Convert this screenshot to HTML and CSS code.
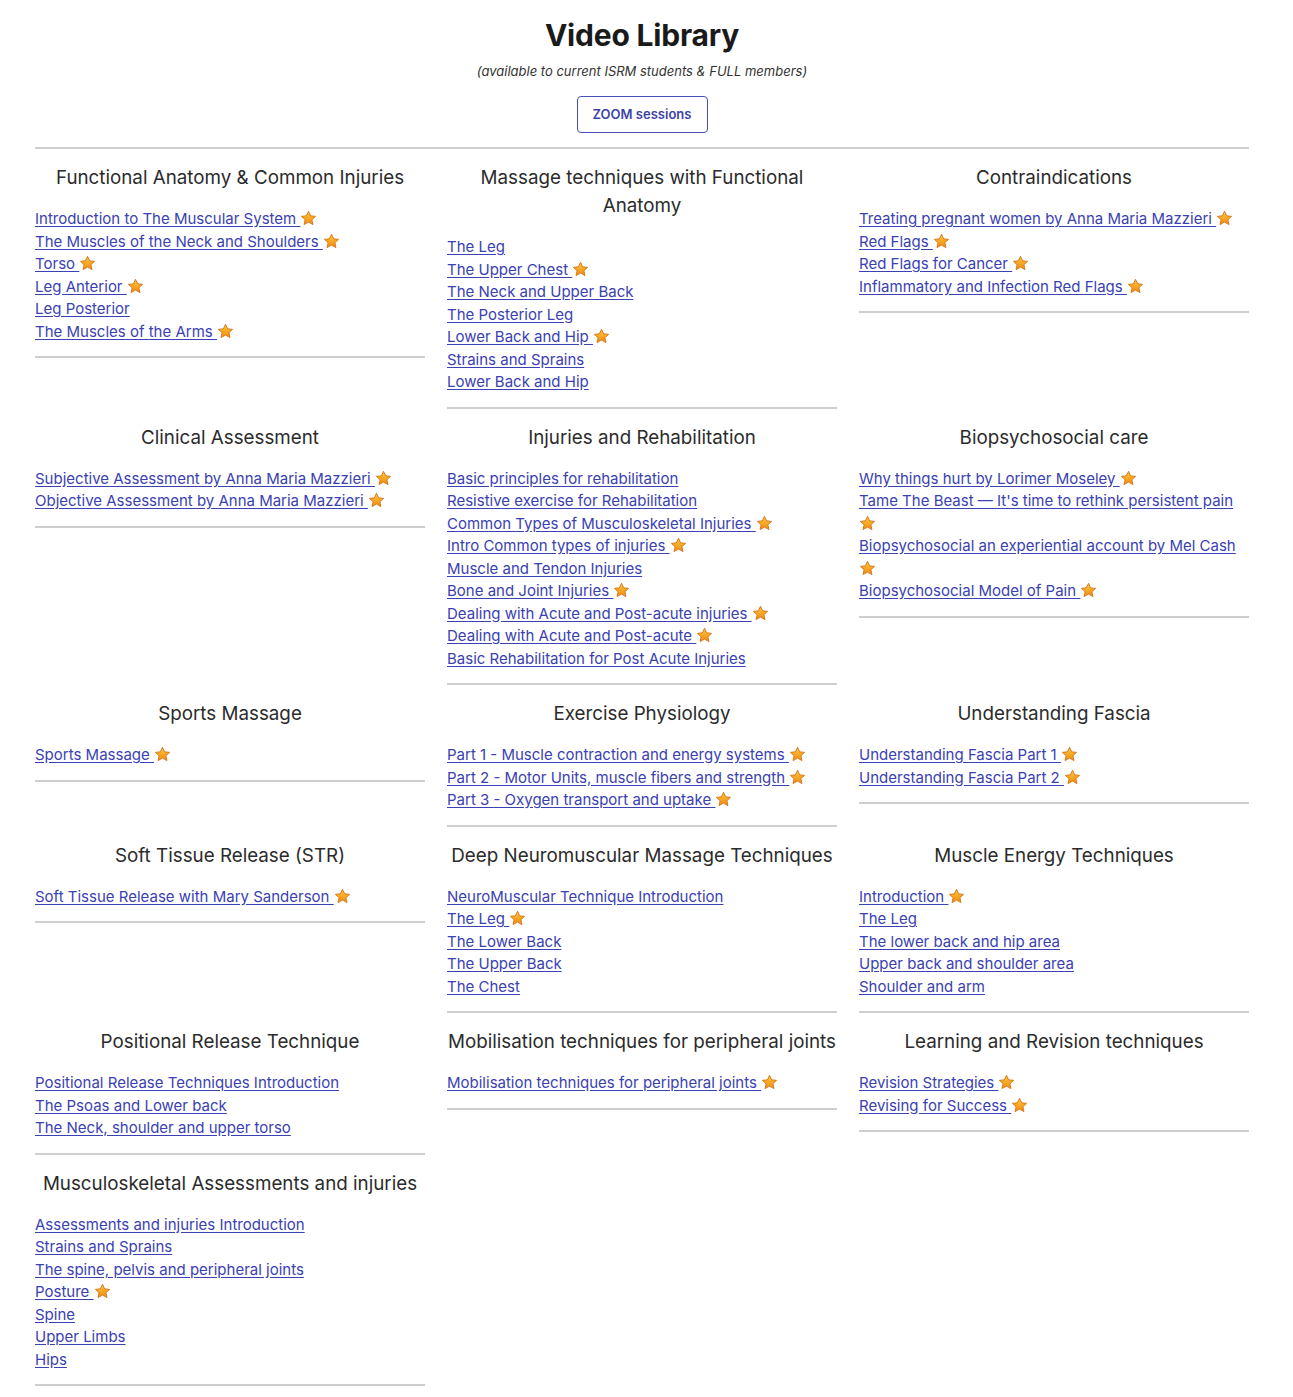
FILE: index.html
```html
<!DOCTYPE html>
<html lang="en">

<head>
    <meta charset="UTF-8">
    <title>Video Library</title>
    <link rel="stylesheet" href="styles.css">
</head>

<body>
    <svg width="0" height="0" class="defs">
        <defs>
            <linearGradient id="starFill" x1="0" y1="0" x2="0" y2="1">
                <stop offset="0" stop-color="#ffc93a" />
                <stop offset="1" stop-color="#f28a12" />
            </linearGradient>
            <symbol id="star" viewBox="0 0 24 24">
                <path d="M12 1.8l3 6.4 7 .8-5.2 4.7 1.5 6.9L12 17.1l-6.3 3.5 1.5-6.9L2 9l7-.8z"
                    fill="url(#starFill)" stroke="#d06d12" stroke-width="1.2" stroke-linejoin="round" />
            </symbol>
        </defs>
    </svg>

    <header>
        <h1>Video Library</h1>
        <p class="note">(available to current ISRM students &amp; FULL members)</p>
        <a class="zoom-btn" href="#">ZOOM sessions</a>
    </header>

    <main id="library"></main>

    <script>
        // second value: 1 = starred
        const sections = [
            ["Functional Anatomy & Common Injuries", [
                ["Introduction to The Muscular System", 1],
                ["The Muscles of the Neck and Shoulders", 1],
                ["Torso", 1],
                ["Leg Anterior", 1],
                ["Leg Posterior", 0],
                ["The Muscles of the Arms", 1]
            ]],
            ["Massage techniques with Functional Anatomy", [
                ["The Leg", 0],
                ["The Upper Chest", 1],
                ["The Neck and Upper Back", 0],
                ["The Posterior Leg", 0],
                ["Lower Back and Hip", 1],
                ["Strains and Sprains", 0],
                ["Lower Back and Hip", 0]
            ]],
            ["Contraindications", [
                ["Treating pregnant women by Anna Maria Mazzieri", 1],
                ["Red Flags", 1],
                ["Red Flags for Cancer", 1],
                ["Inflammatory and Infection Red Flags", 1]
            ]],
            ["Clinical Assessment", [
                ["Subjective Assessment by Anna Maria Mazzieri", 1],
                ["Objective Assessment by Anna Maria Mazzieri", 1]
            ]],
            ["Injuries and Rehabilitation", [
                ["Basic principles for rehabilitation", 0],
                ["Resistive exercise for Rehabilitation", 0],
                ["Common Types of Musculoskeletal Injuries", 1],
                ["Intro Common types of injuries", 1],
                ["Muscle and Tendon Injuries", 0],
                ["Bone and Joint Injuries", 1],
                ["Dealing with Acute and Post-acute injuries", 1],
                ["Dealing with Acute and Post-acute", 1],
                ["Basic Rehabilitation for Post Acute Injuries", 0]
            ]],
            ["Biopsychosocial care", [
                ["Why things hurt by Lorimer Moseley", 1],
                ["Tame The Beast \u2014 It's time to rethink persistent pain", 1],
                ["Biopsychosocial an experiential account by Mel Cash", 1],
                ["Biopsychosocial Model of Pain", 1]
            ]],
            ["Sports Massage", [
                ["Sports Massage", 1]
            ]],
            ["Exercise Physiology", [
                ["Part 1 - Muscle contraction and energy systems", 1],
                ["Part 2 - Motor Units, muscle fibers and strength", 1],
                ["Part 3 - Oxygen transport and uptake", 1]
            ]],
            ["Understanding Fascia", [
                ["Understanding Fascia Part 1", 1],
                ["Understanding Fascia Part 2", 1]
            ]],
            ["Soft Tissue Release (STR)", [
                ["Soft Tissue Release with Mary Sanderson", 1]
            ]],
            ["Deep Neuromuscular Massage Techniques", [
                ["NeuroMuscular Technique Introduction", 0],
                ["The Leg", 1],
                ["The Lower Back", 0],
                ["The Upper Back", 0],
                ["The Chest", 0]
            ]],
            ["Muscle Energy Techniques", [
                ["Introduction", 1],
                ["The Leg", 0],
                ["The lower back and hip area", 0],
                ["Upper back and shoulder area", 0],
                ["Shoulder and arm", 0]
            ]],
            ["Positional Release Technique", [
                ["Positional Release Techniques Introduction", 0],
                ["The Psoas and Lower back", 0],
                ["The Neck, shoulder and upper torso", 0]
            ]],
            ["Mobilisation techniques for peripheral joints", [
                ["Mobilisation techniques for peripheral joints", 1]
            ]],
            ["Learning and Revision techniques", [
                ["Revision Strategies", 1],
                ["Revising for Success", 1]
            ]],
            ["Musculoskeletal Assessments and injuries", [
                ["Assessments and injuries Introduction", 0],
                ["Strains and Sprains", 0],
                ["The spine, pelvis and peripheral joints", 0],
                ["Posture", 1],
                ["Spine", 0],
                ["Upper Limbs", 0],
                ["Hips", 0]
            ]]
        ];

        const star = '<svg class="star"><use href="#star"></use></svg>';
        const library = document.getElementById('library');

        sections.forEach(([title, links]) => {
            const card = document.createElement('section');
            card.className = 'card';
            let html = `<h3>${title}</h3><ul>`;
            links.forEach(([text, starred]) => {
                html += `<li><a href="#">${text}${starred ? ' ' : ''}</a>${starred ? star : ''}</li>`;
            });
            card.innerHTML = html + '</ul>';
            library.appendChild(card);
        });
    </script>
</body>

</html>
```

FILE: styles.css
```css
* {
    margin: 0;
    padding: 0;
    box-sizing: border-box;
}

body {
    font-family: 'Inter', 'Noto Sans', sans-serif;
    color: #222;
    background: #fff;
    width: 1214px;
    margin-left: 35px;
}

.defs {
    position: absolute;
}

header {
    text-align: center;
    padding-top: 16px;
    padding-bottom: 14px;
    border-bottom: 2px solid #cfcfcf;
}

h1 {
    font-size: 30px;
    font-weight: 700;
    line-height: 38px;
    color: #1a1a1a;
    letter-spacing: -0.2px;
}

.note {
    font-size: 13px;
    font-style: italic;
    color: #333;
    margin-top: 8px;
    line-height: 18px;
}

.zoom-btn {
    display: inline-block;
    margin-top: 16px;
    width: 131px;
    height: 37px;
    line-height: 34px;
    border: 1.5px solid #4650b8;
    border-radius: 4px;
    font-size: 13px;
    font-weight: 600;
    color: #3d44a8;
    text-decoration: none;
}

#library {
    display: grid;
    grid-template-columns: repeat(3, 390px);
    column-gap: 22px;
    align-items: start;
}

.card {
    padding-top: 15px;
    padding-bottom: 13px;
    border-bottom: 2px solid #cfcfcf;
}

.card h3 {
    font-size: 18.8px;
    font-weight: 400;
    line-height: 28px;
    text-align: center;
    color: #2b2b2b;
    margin-bottom: 16px;
}

.card ul {
    list-style: none;
}

.card li {
    font-size: 15px;
    line-height: 22.5px;
}

.card a {
    color: #3a41b3;
    text-decoration: underline;
    text-underline-offset: 2px;
}

.star {
    width: 17px;
    height: 17px;
    vertical-align: -3px;
}
```
